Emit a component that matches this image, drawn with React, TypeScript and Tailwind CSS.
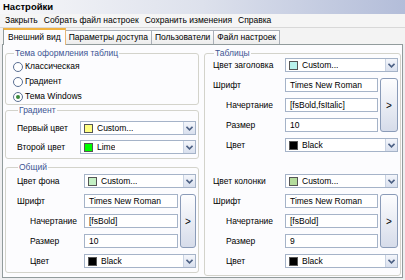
import { ReactNode } from "react";

function Chevron() {
  return (
    <svg width="7" height="5" viewBox="0 0 7 5">
      <path d="M0.5 0.8 L3.5 3.8 L6.5 0.8" fill="none" stroke="#4d6185" strokeWidth="1.6" />
    </svg>
  );
}

function Combo({ swatch, text }: { swatch: string; text: string }) {
  return (
    <div className="flex h-[14px] items-center border border-[#a5b3c8] bg-white">
      <span className="ml-[3px] mr-[4px] h-[9px] w-[9px] border border-[#555]" style={{ backgroundColor: swatch }} />
      <span className="truncate">{text}</span>
      <span className="ml-auto flex h-full w-[12px] items-center justify-center border-l border-[#c8d2e2] bg-gradient-to-b from-[#f4f6fb] to-[#d9e0ee]">
        <Chevron />
      </span>
    </div>
  );
}

function TextBox({ value }: { value: string }) {
  return (
    <div className="flex h-[14px] items-center border border-[#a5b3c8] bg-white px-[4px]">{value}</div>
  );
}

function GroupBox({ title, className, children }: { title: string; className: string; children: ReactNode }) {
  return (
    <fieldset className={`rounded-[3px] border border-[#d3d3cb] ${className}`}>
      <legend className="ml-[1px] px-[1px] text-[8.5px] leading-[10px] text-[#3d5593]">{title}</legend>
      {children}
    </fieldset>
  );
}

function FontBlock(props: {
  colorLabel: string;
  swatch: string;
  cols: string;
  style: string;
  size: string;
}) {
  return (
    <div className={`grid ${props.cols} grid-rows-[14px_14px_14px_14px_14px] items-center gap-x-[2px] gap-y-[6px]`}>
      <span>{props.colorLabel}</span>
      <div className="col-span-2">
        <Combo swatch={props.swatch} text="Custom..." />
      </div>
      <span>Шрифт</span>
      <TextBox value="Times New Roman" />
      <button className="row-span-3 flex h-full items-center justify-center rounded-[3px] border border-[#8a9bb8] bg-gradient-to-b from-[#fdfdfe] to-[#d6dcea] text-[10px]">
        &gt;
      </button>
      <span className="pl-[13px]">Начертание</span>
      <TextBox value={props.style} />
      <span className="pl-[13px]">Размер</span>
      <TextBox value={props.size} />
      <span className="pl-[13px]">Цвет</span>
      <div className="col-span-2">
        <Combo swatch="#000000" text="Black" />
      </div>
    </div>
  );
}

function Radio({ label, checked }: { label: string; checked?: boolean }) {
  return (
    <div className="flex h-[15px] items-center gap-[2px]">
      <span className="flex h-[10px] w-[10px] items-center justify-center rounded-full border border-[#5a6f93] bg-white">
        {checked && <span className="h-[4px] w-[4px] rounded-full bg-[#3c8a3c]" />}
      </span>
      <span>{label}</span>
    </div>
  );
}

export default function App() {
  const menu = ["Закрыть", "Собрать файл настроек", "Сохранить изменения", "Справка"];
  const tabs = ["Параметры доступа", "Пользователи", "Файл настроек"];
  return (
    <div className="h-[280px] w-[405px] overflow-hidden bg-[#eeeef0] font-['Liberation_Sans',Arial,sans-serif] text-[8.5px] text-black">
      <div className="flex h-[14px] items-center bg-gradient-to-r from-[#f7f7f9] via-[#dde1ec] to-[#b3bdd9] pl-[3px] text-[9.5px] font-bold">
        Настройки
      </div>
      <div className="flex h-[14px] items-center gap-[6px] border-b border-[#d8d8d8] bg-[#f5f5f5] pl-[5px] whitespace-nowrap">
        {menu.map((m) => (
          <span key={m}>{m}</span>
        ))}
      </div>
      <div className="flex h-[16px] items-end bg-[#f3f3f3] pl-[3px] whitespace-nowrap">
        <div className="relative z-10 -mb-px flex h-[17px] items-center border border-b-0 border-[#919b9c] border-t-2 border-t-[#f0b23e] border-r-[#e8b877] bg-[#fcfcfe] px-[4px]">
          Внешний вид
        </div>
        {tabs.map((t) => (
          <div
            key={t}
            className="flex h-[14px] items-center border border-l-0 border-b-0 border-[#aab0b8] bg-gradient-to-b from-[#ffffff] to-[#ececec] px-[3px]"
          >
            {t}
          </div>
        ))}
      </div>
      <div className="mx-[2px] flex h-[234px] gap-[5px] border border-[#919b9c] bg-[#fcfcfe] pl-[2px] pr-[1px] pt-[3px]">
        <div className="flex w-[194px] flex-col">
          <GroupBox title="Тема оформления таблиц" className="pl-[7px] pt-px">
            <Radio label="Классическая" />
            <Radio label="Градиент" />
            <Radio label="Тема Windows" checked />
          </GroupBox>
          <GroupBox title="Градиент" className="pl-[11px] pr-[2px] pb-[4px] pt-[6px]">
            <div className="grid grid-cols-[63px_1fr] grid-rows-[14px_14px] items-center gap-y-[5px]">
              <span>Первый цвет</span>
              <Combo swatch="#ffff80" text="Custom..." />
              <span>Второй цвет</span>
              <Combo swatch="#00ff00" text="Lime" />
            </div>
          </GroupBox>
          <GroupBox title="Общий" className="mt-[3px] pl-[11px] pr-[2px] pb-[4px] pt-[2px]">
            <FontBlock colorLabel="Цвет фона" swatch="#c4f0c4" cols="grid-cols-[65px_1fr_16px]" style="[fsBold]" size="10" />
          </GroupBox>
        </div>
        <div className="flex flex-1 flex-col">
          <GroupBox title="Таблицы" className="h-[228px] pl-[8px] pr-[2px]">
            <FontBlock
              colorLabel="Цвет заголовка"
              swatch="#b8f2ec"
              cols="grid-cols-[70px_1fr_18px]"
              style="[fsBold,fsItalic]"
              size="10"
            />
            <div className="mt-[22px]">
              <FontBlock colorLabel="Цвет колонки" swatch="#b4dc9c" cols="grid-cols-[70px_1fr_18px]" style="[fsBold]" size="9" />
            </div>
          </GroupBox>
        </div>
      </div>
    </div>
  );
}
